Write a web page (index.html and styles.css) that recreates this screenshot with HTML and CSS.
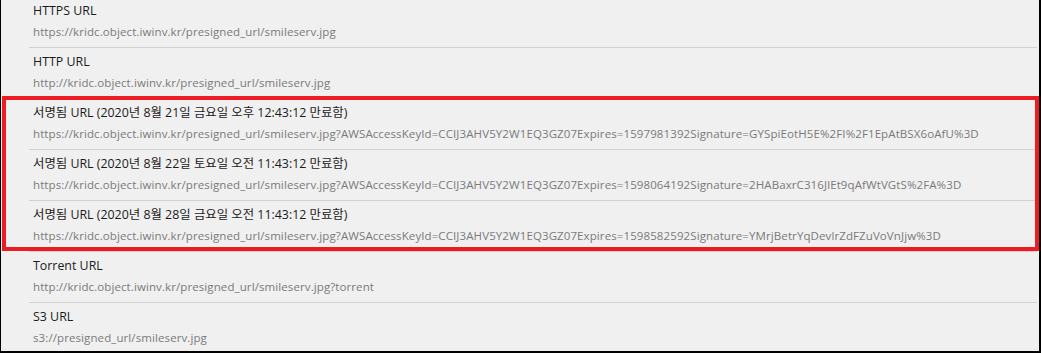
FILE: index.html
```html
<!DOCTYPE html>
<html lang="ko">
<head>
  <meta charset="UTF-8" />
  <title>Object URLs</title>
  <link rel="stylesheet" href="styles.css">
</head>
<body>
  <div class="frame">
    <ul class="url-list">
      <li class="url-item">
        <div class="url-title">HTTPS URL</div>
        <div class="url-value">https://kridc.object.iwinv.kr/presigned_url/smileserv.jpg</div>
      </li>
      <li class="url-item">
        <div class="url-title">HTTP URL</div>
        <div class="url-value">http://kridc.object.iwinv.kr/presigned_url/smileserv.jpg</div>
      </li>
      <li class="url-item">
        <div class="url-title">서명됨 URL (2020년 8월 21일 금요일 오후 12:43:12 만료함)</div>
        <div class="url-value">https://kridc.object.iwinv.kr/presigned_url/smileserv.jpg?AWSAccessKeyId=CCIJ3AHV5Y2W1EQ3GZ07Expires=1597981392Signature=GYSpiEotH5E%2FI%2F1EpAtBSX6oAfU%3D</div>
      </li>
      <li class="url-item">
        <div class="url-title">서명됨 URL (2020년 8월 22일 토요일 오전 11:43:12 만료함)</div>
        <div class="url-value">https://kridc.object.iwinv.kr/presigned_url/smileserv.jpg?AWSAccessKeyId=CCIJ3AHV5Y2W1EQ3GZ07Expires=1598064192Signature=2HABaxrC316JlEt9qAfWtVGtS%2FA%3D</div>
      </li>
      <li class="url-item">
        <div class="url-title">서명됨 URL (2020년 8월 28일 금요일 오전 11:43:12 만료함)</div>
        <div class="url-value">https://kridc.object.iwinv.kr/presigned_url/smileserv.jpg?AWSAccessKeyId=CCIJ3AHV5Y2W1EQ3GZ07Expires=1598582592Signature=YMrjBetrYqDevlrZdFZuVoVnJjw%3D</div>
      </li>
      <li class="url-item">
        <div class="url-title">Torrent URL</div>
        <div class="url-value">http://kridc.object.iwinv.kr/presigned_url/smileserv.jpg?torrent</div>
      </li>
      <li class="url-item">
        <div class="url-title">S3 URL</div>
        <div class="url-value">s3://presigned_url/smileserv.jpg</div>
      </li>
    </ul>
    <div class="highlight"></div>
  </div>
</body>
</html>
```

FILE: styles.css
```css
html, body {
  margin: 0;
  padding: 0;
}
body {
  background: #f0f0f0;
  font-family: 'Open Sans', 'Noto Sans CJK KR', sans-serif;
  font-size: 12px;
}
.frame {
  position: relative;
  width: 1041px;
  height: 353px;
  box-sizing: border-box;
  border-left: 1px solid #000;
  border-right: 2px solid #000;
  border-bottom: 2px solid #000;
  background: #f0f0f0;
  overflow: hidden;
}
.url-list {
  list-style: none;
  margin: -3px 2px 0 28px;
  padding: 0;
}
.url-item {
  height: 51px;
  padding: 5px 0 0 4px;
  box-sizing: border-box;
  border-bottom: 1px solid #d2d2d2;
}
.url-title {
  line-height: 18px;
  font-size: 12.4px;
  color: #1b1b1b;
}
.url-value {
  margin-top: 3px;
  line-height: 18px;
  font-size: 11.5px;
  letter-spacing: 0.1px;
  color: #7a7a7a;
  white-space: nowrap;
}
/* red annotation box over the signed URLs */
.highlight {
  position: absolute;
  left: 1px;
  top: 96px;
  width: 1037px;
  height: 155px;
  box-sizing: border-box;
  border: 4px solid #ed1c24;
}
```
